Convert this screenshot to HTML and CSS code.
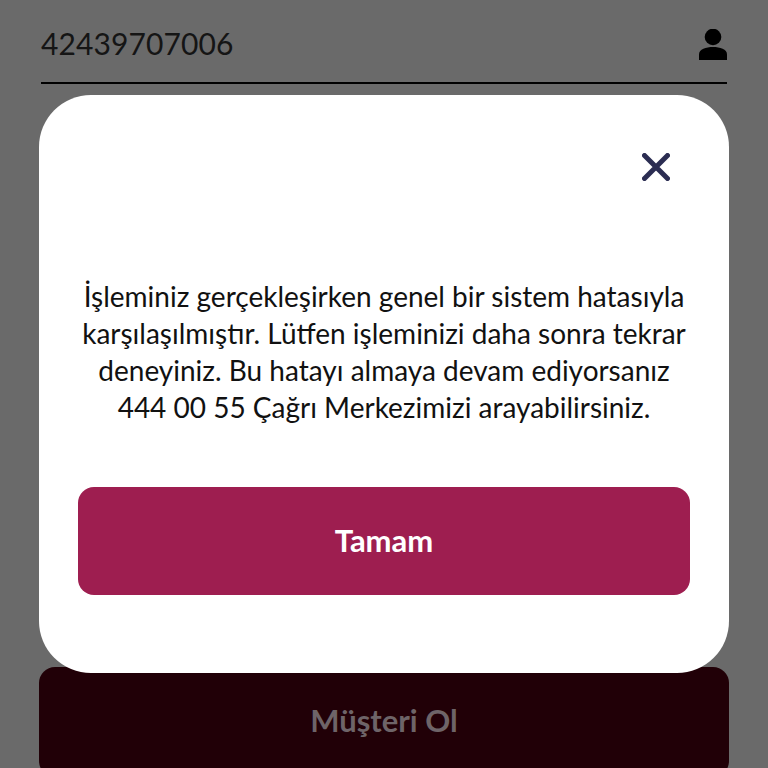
FILE: index.html
```html
<!DOCTYPE html>
<html lang="tr">
<head>
<meta charset="utf-8">
<title>Hata</title>
<link rel="stylesheet" href="styles.css">
</head>
<body>
<div class="page">
  <div class="field">
    <span class="field-value">42439707006</span>
    <svg class="user-icon" viewBox="0 0 28 31" width="28" height="31"><circle cx="14" cy="8" r="8.300"/><path d="M0 31v-5.500c0-5.500 7-7.500 14-7.500s14 2 14 7.500v5.500z"/></svg>
  </div>
  <div class="modal">
    <div class="modal-top">
      <svg class="close-icon" viewBox="0 0 28 28" width="28" height="28"><path d="M2.500 2.500l23 23M25.500 2.500l-23 23"/></svg>
    </div>
    <p class="message">İşleminiz gerçekleşirken genel bir sistem hatasıyla karşılaşılmıştır. Lütfen işleminizi daha sonra tekrar deneyiniz. Bu hatayı almaya devam ediyorsanız 444 00 55 Çağrı Merkezimizi arayabilirsiniz.</p>
    <button class="ok">Tamam</button>
  </div>
  <div class="cta">Müşteri Ol</div>
</div>
</body>
</html>
```
FILE: styles.css
```css
* { box-sizing: border-box; }
html, body { margin: 0; padding: 0; }
body { width: 768px; height: 768px; overflow: hidden; background: #6a6a6a; font-family: Lato, "Noto Sans", sans-serif; }
.page { padding: 0 39px; height: 768px; overflow: hidden; display: flex; flex-direction: column; }
.field { flex: none; height: 84px; margin: 0 2px; padding-top: 6px; border-bottom: 2px solid #000; display: flex; justify-content: space-between; align-items: center; color: #151515; }
.field-value { font-size: 30px; letter-spacing: 0.1px; margin-bottom: 2px; }
.user-icon { fill: #000; }
.modal { flex: none; margin-top: 11px; height: 578px; background: #fff; border-radius: 52px; padding: 58px 39px 0; display: flex; flex-direction: column; position: relative; }
.modal-top { display: flex; justify-content: flex-end; padding-right: 20px; height: 30px; }
.close-icon { fill: none; stroke: #2b2d52; stroke-width: 5; stroke-linecap: round; }
.message { margin: 95px 0 0; font-size: 28px; line-height: 37px; text-align: center; color: #111; height: 209px; }
.ok { flex: none; height: 108px; border: 0; padding: 0 0 2px; border-radius: 16px; background: #9e1e50; color: #fff; font: 700 31px Lato, sans-serif; }
.cta { flex: none; margin-top: -6px; height: 110px; border-radius: 16px; background: #210007; color: #6e6468; font-weight: 700; font-size: 31px; text-align: center; padding-top: 34px; }
```
